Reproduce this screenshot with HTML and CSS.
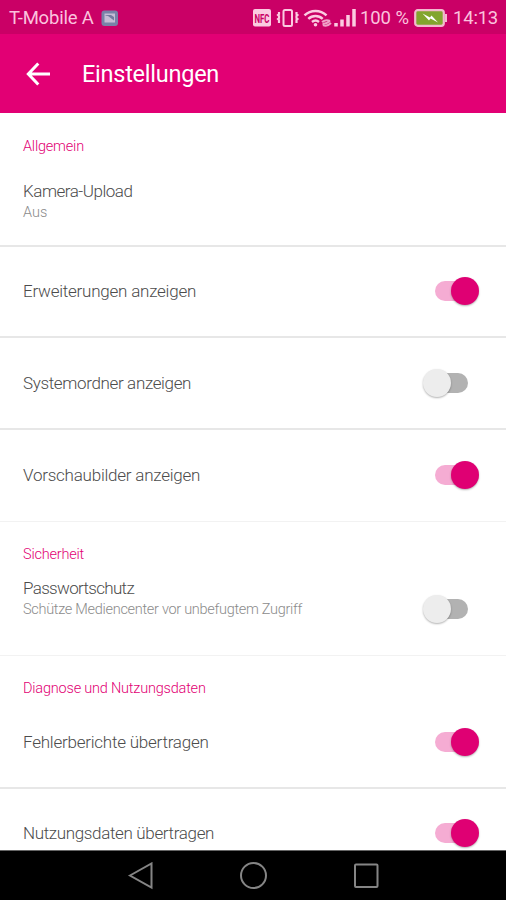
FILE: index.html
```html
<!DOCTYPE html>
<html lang="de">
<head>
<meta charset="utf-8">
<title>Einstellungen</title>
<link rel="stylesheet" href="styles.css">
</head>
<body>
<div class="screen">
  <div class="status">
    <span class="carrier">T-Mobile A</span>
    <svg class="photo" width="18" height="17" viewBox="0 0 18 17"><rect x=".5" y=".5" width="16.5" height="15.5" rx="3" fill="#7882a8"/><rect x="3.5" y="3.5" width="10.5" height="9" fill="#c6bcd5"/><path d="M4 5.5l3 .5 6 4.5V7L10 5H5z" fill="#747aa0"/></svg>
    <svg class="signals" width="106" height="20" viewBox="0 0 106 20" fill="none" stroke="#fbcbe1" stroke-width="2">
      <rect x="0" y="1" width="18" height="17.500" rx="2" fill="#fbcbe1" stroke="none"/>
      <text x="1.500" y="14.800" class="nfc" textLength="15" lengthAdjust="spacingAndGlyphs">NFC</text>
      <rect x="30.500" y="2" width="8.500" height="16" rx="1.500"/>
      <path d="M26 4v2l-1 1 1 1v2l-1 1 1 1v3M43.500 4v2l1 1-1 1v2l1 1-1 1v3" stroke-width="2.200"/>
      <path d="M51.500 7.300a16 16 0 0 1 22 0M55.300 10.800a10.500 10.500 0 0 1 14.400 0M59 14a5.500 5.500 0 0 1 7 0" stroke-width="2.500"/>
      <circle cx="62.500" cy="16.800" r="1.800" fill="#fbcbe1" stroke="none"/>
      <path d="M69 14q4-3 8-1M70 17q4 2 8-2M69.500 16q4 0 7.500-3" stroke="#f0a0c8"/>
      <path d="M83 15v3.500M89 11.500v7M95 7v11.500M101 1v17.500" stroke-width="3.500"/>
    </svg>
    <span class="percent">100 %</span>
    <svg class="battery" width="34" height="20" viewBox="0 0 34 20"><rect x="1.200" y="2.200" width="28.600" height="15.600" rx="2.500" fill="#82a52e" stroke="#f3b9cf" stroke-width="2.200"/><path d="M31 6h2v8h-2z" fill="#f3b9cf"/><path d="M8.500 5.500l7.500 4 1.500-2 6.500 7-7.500-4-1.500 2z" fill="#fff"/></svg>
    <span class="clock">14:13</span>
  </div>
  <header class="appbar">
    <svg class="back" width="24" height="24" viewBox="0 0 24 24" fill="none" stroke="#fff" stroke-width="3"><path d="M12.300 1.500L2.300 12l10 10.500M2 12h22"/></svg>
    <h1>Einstellungen</h1>
  </header>
  <main>
    <section class="general">
      <h2>Allgemein</h2>
      <div class="item camera"><div><p class="snug">Kamera-Upload</p><small class="status-value">Aus</small></div></div>
      <div class="item"><p>Erweiterungen anzeigen</p><i class="switch on"></i></div>
      <div class="item"><p class="close">Systemordner anzeigen</p><i class="switch"></i></div>
      <div class="item last"><p>Vorschaubilder anzeigen</p><i class="switch on"></i></div>
    </section>
    <section class="security">
      <h2>Sicherheit</h2>
      <div class="item last"><div><p class="tight">Passwortschutz</p><small>Schütze Mediencenter vor unbefugtem Zugriff</small></div><i class="switch"></i></div>
    </section>
    <section class="diagnosis">
      <h2>Diagnose und Nutzungsdaten</h2>
      <div class="item"><p>Fehlerberichte übertragen</p><i class="switch on"></i></div>
      <div class="item"><p class="close">Nutzungsdaten übertragen</p><i class="switch on"></i></div>
    </section>
  </main>
  <nav>
    <svg width="28" height="28" viewBox="0 0 28 28"><path d="M4 13.500L25.500 1.500v24z"/></svg>
    <svg width="28" height="28" viewBox="0 0 28 28"><circle cx="14.500" cy="13.500" r="12.500"/></svg>
    <svg width="28" height="28" viewBox="0 0 28 28"><rect x="3" y="2.500" width="22.500" height="22.500" rx="1"/></svg>
  </nav>
</div>
</body>
</html>
```

FILE: styles.css
```css
* { box-sizing: border-box; }
body { margin: 0; font-family: Roboto, "Liberation Sans", sans-serif; background: #fff; }
h1, h2, p { margin: 0; font-weight: 300; }
svg { display: block; flex: none; }
.screen { width: 506px; height: 900px; display: flex; flex-direction: column; overflow: hidden; }
.status { height: 34px; flex: none; display: flex; align-items: center; padding: 2px 0 0 9px; background: #ca0066; color: #fbc3de; font-size: 18.5px; white-space: nowrap; }
.carrier { width: 92px; letter-spacing: -.2px; }
.signals { margin-left: 134px; }
.nfc { font: bold 13px Roboto, sans-serif; fill: #ca0066; stroke: none; }
.percent { width: 54px; margin-left: 1px; letter-spacing: -.1px; }
.battery { width: 34px; }
.clock { margin-left: 5px; letter-spacing: -.2px; }
.appbar { height: 79px; flex: none; display: flex; align-items: center; padding-left: 26px; background: #e20074; color: #fff; }
.appbar h1 { margin-left: 32px; font-size: 23.5px; font-weight: 400; letter-spacing: -.25px; }
main { flex: 1; min-height: 0; overflow: hidden; }
section { border-bottom: 1px solid #f2f2f2; }
h2 { padding: 1px 0 0 23px; color: #e20074; font-size: 14.500px; line-height: 17px; font-weight: 300; letter-spacing: -.2px; }
.general { height: 409px; padding-top: 24px; }
.security { height: 134px; padding-top: 23px; }
.diagnosis { padding-top: 23px; border: 0; }
.item { height: 91.500px; display: flex; align-items: center; justify-content: space-between; padding: 0 26px 0 23px; border-bottom: 2px solid #e7e7e7; color: #4c4c4c; }
.item p { font-size: 17px; line-height: 22px; letter-spacing: -.23px; white-space: nowrap; }
.item .close { letter-spacing: -.35px; }
.item .snug { letter-spacing: -.48px; }
.item .tight { letter-spacing: -.68px; }
.item small { display: block; font-size: 14.500px; line-height: 21px; font-weight: 300; letter-spacing: -.29px; color: #8b8b8b; white-space: nowrap; }
.item .status-value { letter-spacing: 0; }
.item.last { border-bottom: 0; }
.item.camera { height: 91.500px; padding: 3px 26px 0 23px; }
.security .item.last { height: 92px; padding-bottom: 22px; }
.security .switch { margin-top: 21px; }
.switch { position: relative; width: 34px; height: 20px; margin-right: 12px; border-radius: 10px; background: #b2b2b2; }
.switch::after { content: ""; position: absolute; left: -11px; top: -4px; width: 28px; height: 28px; border-radius: 50%; background: #ededed; box-shadow: 0 1px 2px rgba(0,0,0,.3); }
.switch.on { margin-right: 11px; background: #f5acd3; }
.switch.on::after { left: 16px; background: #df0073; }
nav { height: 50px; flex: none; display: flex; align-items: center; justify-content: center; gap: 85px; background: #000; border-top: 1px solid #666; }
nav svg { fill: none; stroke: #858585; stroke-width: 2; }
```
